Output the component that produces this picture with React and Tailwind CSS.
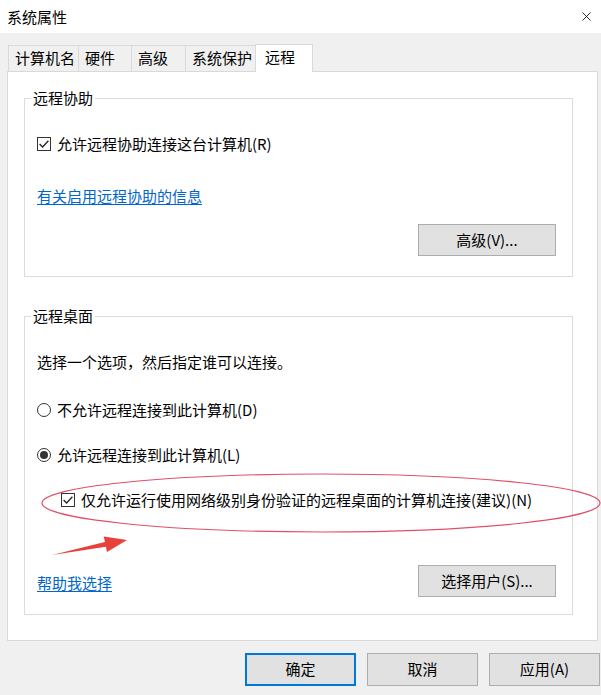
import { X } from 'lucide-react';

const font = { fontFamily: '"Microsoft YaHei", "Noto Sans CJK SC", "Noto Sans", sans-serif' };

function CheckBox() {
    return (
        <span className="flex h-[14px] w-[14px] shrink-0 items-center justify-center border border-[#333333] bg-white">
            <svg width="12" height="12" viewBox="0 0 12 12">
                <path d="M1.6 6 L4.6 9 L10.4 2.8" fill="none" stroke="#222222" strokeWidth="1.3" />
            </svg>
        </span>
    );
}

function Radio({ checked }) {
    return (
        <span className="flex h-[14px] w-[14px] shrink-0 items-center justify-center rounded-full border border-[#333333] bg-white">
            {checked && <span className="h-[8px] w-[8px] rounded-full bg-[#333333]" />}
        </span>
    );
}

function Button({ children, primary, className = '' }) {
    return (
        <div
            className={`flex items-center justify-center bg-[#e1e1e1] text-[15px] ${primary ? 'border-2 border-[#0078d7]' : 'border border-[#adadad]'} ${className}`}
        >
            {children}
        </div>
    );
}

function App() {
    const tabs = [
        { name: '计算机名', w: 'w-[71px]' },
        { name: '硬件', w: 'w-[54px]' },
        { name: '高级', w: 'w-[55px]' },
        { name: '系统保护', w: 'w-[71px]' },
    ];

    return (
        <div className="relative h-[695px] w-[601px] overflow-hidden bg-[#f0f0f0] text-black" style={font}>
            {/* title bar */}
            <div className="flex h-[33px] items-center justify-between bg-white pl-[7px] pr-[7px]">
                <span className="text-[15px] leading-[20px]">系统属性</span>
                <X className="h-[15px] w-[15px]" strokeWidth={1.3} />
            </div>

            {/* tabs */}
            <div className="mt-[11px] flex h-[28px] items-end pl-[8px]">
                {tabs.map((t) => (
                    <div
                        key={t.name}
                        className={`mb-[1px] flex h-[26px] items-center border border-b-0 border-[#d9d9d9] bg-[#f0f0f0] pl-[6px] text-[15px] -ml-[1px] first:ml-0 ${t.w}`}
                    >
                        {t.name}
                    </div>
                ))}
                <div className="relative z-10 -ml-[1px] flex h-[28px] w-[58px] items-center border border-b-0 border-[#d9d9d9] bg-white pb-[2px] pl-[9px] text-[15px]">
                    远程
                </div>
            </div>

            {/* panel */}
            <div className="-mt-[1px] ml-[7px] h-[570px] w-[591px] border border-[#d9d9d9] bg-white pl-[16px] text-[15px] leading-[20px]">
                <fieldset className="mt-[16px] w-[549px] border border-[#dcdcdc] p-0 pb-[20px]">
                    <legend className="ml-[6px] px-[2px] leading-[20px]">远程协助</legend>
                    <div className="pl-[12px] pr-[16px]">
                        <div className="mt-[26px] flex h-[20px] items-center gap-[6px]">
                            <CheckBox />
                            <span>允许远程协助连接这台计算机(R)</span>
                        </div>
                        <div className="mt-[32px] h-[20px]">
                            <span className="text-[#0066cc] underline underline-offset-2">有关启用远程协助的信息</span>
                        </div>
                        <div className="mt-[18px] flex justify-end">
                            <Button className="h-[32px] w-[138px]">高级(V)...</Button>
                        </div>
                    </div>
                </fieldset>

                <fieldset className="mt-[29px] w-[549px] border border-[#dcdcdc] p-0 pb-[17px]">
                    <legend className="ml-[6px] px-[2px] leading-[20px]">远程桌面</legend>
                    <div className="pl-[12px] pr-[16px]">
                        <div className="mt-[26px] h-[20px]">选择一个选项，然后指定谁可以连接。</div>
                        <div className="mt-[28px] flex h-[20px] items-center gap-[6px]">
                            <Radio />
                            <span>不允许远程连接到此计算机(D)</span>
                        </div>
                        <div className="mt-[25px] flex h-[20px] items-center gap-[6px]">
                            <Radio checked />
                            <span>允许远程连接到此计算机(L)</span>
                        </div>
                        <div className="mt-[25px] flex h-[20px] items-center gap-[6px] pl-[24px]">
                            <CheckBox />
                            <span>仅允许运行使用网络级别身份验证的远程桌面的计算机连接(建议)(N)</span>
                        </div>
                        <div className="mt-[55px] flex items-center justify-between">
                            <span className="pt-[4px] text-[#0066cc] underline underline-offset-2">帮助我选择</span>
                            <Button className="h-[32px] w-[138px]">选择用户(S)...</Button>
                        </div>
                    </div>
                </fieldset>
            </div>

            {/* dialog buttons */}
            <div className="mt-[12px] flex justify-end gap-[11px] pr-[1px]">
                <Button primary className="h-[33px] w-[111px]">确定</Button>
                <Button className="h-[33px] w-[111px]">取消</Button>
                <Button className="h-[33px] w-[111px]">应用(A)</Button>
            </div>

            {/* red annotation */}
            <svg className="pointer-events-none absolute left-0 top-0" width="601" height="695">
                <ellipse cx="321" cy="503" rx="279" ry="29" fill="none" stroke="#e0506a" strokeWidth="1.2" />
                <polygon
                    points="52,555 105.9,546.8 107,552.1 127,540 103.8,536.5 104.9,541.9"
                    fill="#e8413c"
                />
            </svg>
        </div>
    );
}

export default App;
